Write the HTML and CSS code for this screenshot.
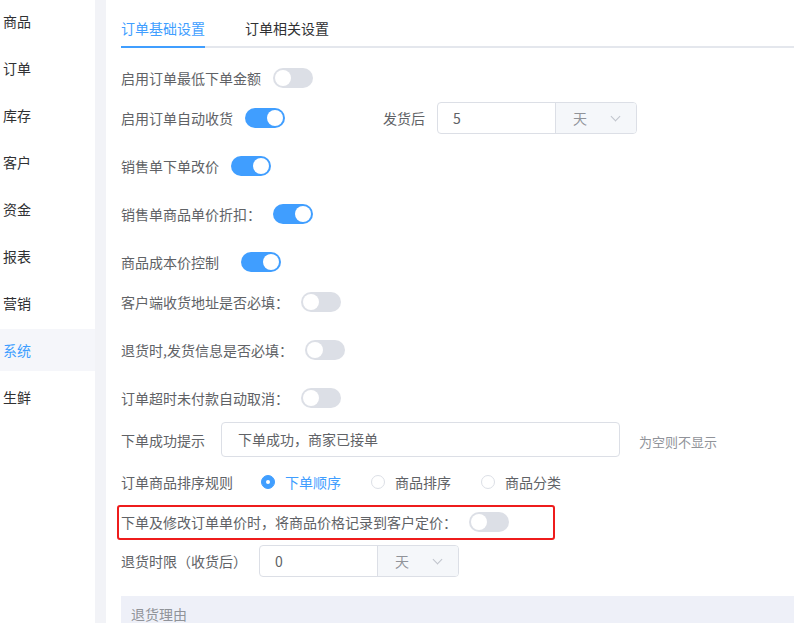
FILE: index.html
```html
<!DOCTYPE html>
<html lang="zh-CN">
<head>
    <meta charset="UTF-8">
    <meta name="viewport" content="width=device-width, initial-scale=1.0">
    <title>订单设置</title>
    <link rel="stylesheet" href="styles.css">
</head>
<body>
    <div class="page">
        <!-- Left menu -->
        <ul class="menu">
            <li>商品</li>
            <li>订单</li>
            <li>库存</li>
            <li>客户</li>
            <li>资金</li>
            <li>报表</li>
            <li>营销</li>
            <li class="active">系统</li>
            <li>生鲜</li>
        </ul>
        <div class="gutter"></div>

        <div class="main">
            <div class="tabs">
                <span class="tab active">订单基础设置</span>
                <span class="tab">订单相关设置</span>
            </div>

            <div class="row">
                <span class="label">启用订单最低下单金额</span>
                <span class="switch"></span>
            </div>

            <div class="row wide">
                <span class="label">启用订单自动收货</span>
                <span class="switch on"></span>
                <span class="label after">发货后</span>
                <div class="group">
                    <span class="group-input">5</span>
                    <span class="group-select">天<i class="arrow"></i></span>
                </div>
            </div>

            <div class="row wide">
                <span class="label">销售单下单改价</span>
                <span class="switch on"></span>
            </div>

            <div class="row wide">
                <span class="label">销售单商品单价折扣：</span>
                <span class="switch on"></span>
            </div>

            <div class="row">
                <span class="label">商品成本价控制</span>
                <span class="switch on far"></span>
            </div>

            <div class="row wide">
                <span class="label">客户端收货地址是否必填：</span>
                <span class="switch"></span>
            </div>

            <div class="row wide">
                <span class="label">退货时,发货信息是否必填：</span>
                <span class="switch"></span>
            </div>

            <div class="row">
                <span class="label">订单超时未付款自动取消：</span>
                <span class="switch"></span>
            </div>

            <div class="row tall">
                <span class="label">下单成功提示</span>
                <span class="text-input">下单成功，商家已接单</span>
                <span class="hint">为空则不显示</span>
            </div>

            <div class="row">
                <span class="label">订单商品排序规则</span>
                <div class="radios">
                    <span class="radio checked"><i></i>下单顺序</span>
                    <span class="radio"><i></i>商品排序</span>
                    <span class="radio"><i></i>商品分类</span>
                </div>
            </div>

            <div class="row marked">
                <span class="label">下单及修改订单单价时，将商品价格记录到客户定价：</span>
                <span class="switch"></span>
            </div>

            <div class="row">
                <span class="label">退货时限（收货后）</span>
                <div class="group">
                    <span class="group-input">0</span>
                    <span class="group-select">天<i class="arrow"></i></span>
                </div>
            </div>

            <div class="reasons">退货理由</div>
        </div>
    </div>
</body>
</html>
```

FILE: styles.css
```css
body {
    margin: 0;
    font-family: "Noto Sans CJK SC", "Noto Sans", sans-serif;
    font-size: 14px;
    color: #606266;
    background: #fff;
}
.page {
    display: flex;
    height: 623px;
    overflow: hidden;
}
.menu {
    list-style: none;
    margin: 0;
    padding: 0;
    width: 95px;
    flex-shrink: 0;
}
.menu li {
    height: 42px;
    line-height: 42px;
    margin-bottom: 5px;
    padding-left: 3px;
    color: #303133;
}
.menu li.active {
    background: #f5f6fa;
    color: #409eff;
}
.gutter {
    width: 11px;
    flex-shrink: 0;
    background: #f2f3f7;
}
.main {
    flex: 1;
    padding-left: 15px;
}
.tabs {
    display: flex;
    gap: 40px;
    border-bottom: 2px solid #e4e7ed;
    margin-bottom: 14px;
}
.tab {
    padding-top: 18px;
    padding-bottom: 8px;
    line-height: 20px;
    color: #303133;
    margin-bottom: -2px;
    border-bottom: 2px solid transparent;
}
.tab.active {
    color: #409eff;
    border-bottom-color: #409eff;
}
.row {
    display: flex;
    align-items: center;
    height: 32px;
    margin-bottom: 8px;
}
.row.wide {
    margin-bottom: 16px;
}
.row.tall {
    height: 35px;
    margin-bottom: 9px;
}
.label {
    white-space: nowrap;
    line-height: 20px;
}
.label.after {
    margin-left: 98px;
}
.switch {
    position: relative;
    width: 40px;
    height: 20px;
    border-radius: 10px;
    background: #dcdfe6;
    margin-left: 12px;
    flex-shrink: 0;
}
.switch::after {
    content: "";
    position: absolute;
    top: 2px;
    left: 2px;
    width: 16px;
    height: 16px;
    border-radius: 50%;
    background: #fff;
}
.switch.on {
    background: #409eff;
}
.switch.on::after {
    left: 22px;
}
.switch.far {
    margin-left: 22px;
}
.group {
    display: flex;
    width: 200px;
    height: 32px;
    margin-left: 12px;
    border: 1px solid #dcdfe6;
    border-radius: 4px;
    box-sizing: border-box;
    overflow: hidden;
}
.group-input {
    width: 117px;
    padding-left: 15px;
    line-height: 30px;
    box-sizing: border-box;
    color: #606266;
}
.group-select {
    flex: 1;
    display: flex;
    align-items: center;
    justify-content: space-between;
    padding: 0 17px 0 17px;
    background: #f5f7fa;
    border-left: 1px solid #dcdfe6;
    color: #909399;
}
.arrow {
    width: 6px;
    height: 6px;
    border-right: 1px solid #c0c4cc;
    border-bottom: 1px solid #c0c4cc;
    transform: rotate(45deg);
    margin-top: -4px;
}
.text-input {
    width: 399px;
    height: 35px;
    margin-left: 16px;
    padding-left: 16px;
    box-sizing: border-box;
    border: 1px solid #dcdfe6;
    border-radius: 4px;
    line-height: 33px;
    color: #606266;
}
.hint {
    margin-left: 19px;
    font-size: 13px;
    color: #909399;
    margin-top: 4px;
}
.radios {
    display: flex;
    gap: 30px;
    margin-left: 28px;
}
.radio {
    display: flex;
    align-items: center;
    gap: 10px;
    color: #606266;
}
.radio i {
    width: 14px;
    height: 14px;
    border: 1px solid #dcdfe6;
    border-radius: 50%;
    box-sizing: border-box;
    background: #fff;
    position: relative;
}
.radio.checked {
    color: #409eff;
}
.radio.checked i {
    border-color: #409eff;
    background: #409eff;
}
.radio.checked i::after {
    content: "";
    position: absolute;
    top: 4px;
    left: 4px;
    width: 4px;
    height: 4px;
    border-radius: 50%;
    background: #fff;
}
.row.marked {
    position: relative;
    margin-bottom: 7px;
}
.row.marked::before {
    content: "";
    position: absolute;
    left: -4px;
    top: -1px;
    width: 438px;
    height: 35px;
    border: 2px solid #ee1c1c;
    border-radius: 3px;
    box-sizing: border-box;
}
.reasons {
    margin-top: 19px;
    height: 40px;
    background: #eef0f8;
    padding: 8px 10px;
    box-sizing: border-box;
    color: #909399;
}
```
